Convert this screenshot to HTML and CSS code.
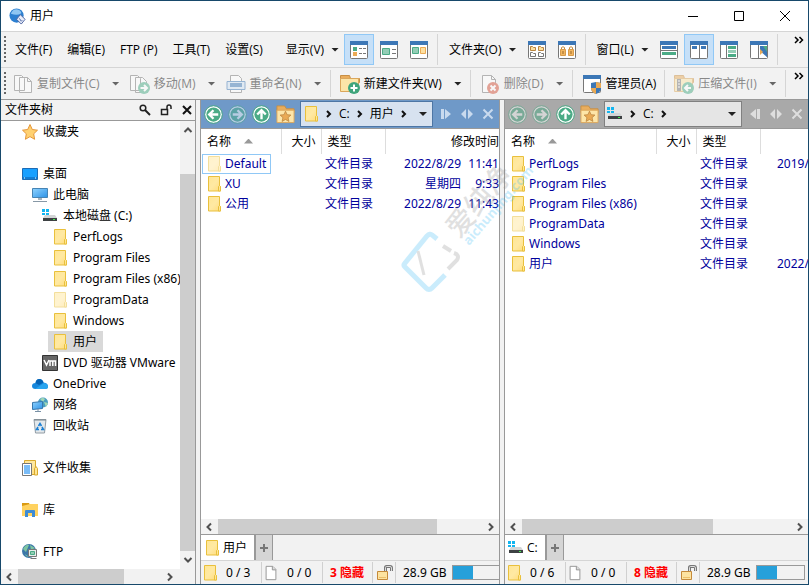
FILE: index.html
```html
<!DOCTYPE html>
<html lang="zh-CN">
<head>
    <meta charset="UTF-8">
    <meta name="viewport" content="width=device-width, initial-scale=1.0">
    <title>用户</title>
    <link rel="stylesheet" href="styles.css">
</head>
<body>
    <!-- 图标 -->
    <svg class="sprite" aria-hidden="true">
        <linearGradient id="gold" x1="0" y1="0" x2="1" y2="1">
            <stop offset="0" stop-color="#ffe694"/><stop offset=".5" stop-color="#ffe9a3"/><stop offset="1" stop-color="#ffdc7c"/>
        </linearGradient>
        <linearGradient id="sky" x1="0" y1="0" x2="1" y2="1">
            <stop offset="0" stop-color="#8fd3ff"/><stop offset="1" stop-color="#2d92e6"/>
        </linearGradient>
        <symbol id="folder" viewBox="0 0 16 16">
            <path d="M2.500 .5h11v10h1v4.500h-12z" fill="url(#gold)" stroke="#e9c03c"/>
            <path d="M12.500 15v-4.500l1-1 1 1V15z" fill="#ffe694" stroke="#e9c03c"/>
        </symbol>
        <symbol id="drive" viewBox="0 0 16 16">
            <path d="M0 1h3v3H0zM4 1h3v3H4zM0 5h3v2H0zM4 5h3v2H4z" fill="#12b5f0"/>
            <path d="M3 7h10l2 3H1z" fill="#d3d5d6"/>
            <path d="M1 10h14v3H1z" fill="#3d4143"/>
            <path d="M11 11h2v1h-2z" fill="#3ff04d"/>
        </symbol>
        <symbol id="doc" viewBox="0 0 16 18">
            <path d="M2.500 1.500h7.500l3.500 3.500v11.500h-11z" fill="#fff" stroke="#8d8d8d"/>
            <path d="M9.500 1.500v4h4" fill="#ddd" stroke="#8d8d8d"/>
        </symbol>
        <symbol id="lock" viewBox="0 0 18 18">
            <path d="M9.500 8V3.500q0-1 1-1h3.500q1.500 0 1.500 1.500v3" fill="none" stroke="#777" stroke-width="3"/>
            <path d="M9.500 8V3.500q0-1 1-1h3.500q1.500 0 1.500 1.500v3" fill="none" stroke="#ddd"/>
            <path d="M1.500 7.500h10v8h-10z" fill="#fde3a0" stroke="#c58a3a"/>
            <path d="M3 13.500h7" stroke="#edc06a"/>
        </symbol>
        <symbol id="arrow-left" viewBox="0 0 20 20">
            <circle cx="10" cy="10" r="9" fill="#fff"/><circle cx="10" cy="10" r="7.500" fill="#4bab86"/><circle cx="10" cy="10" r="9.300" fill="none" stroke="#4bab86"/>
            <path d="M15 10H6M10 5.500L5.500 10l4.500 4.500" fill="none" stroke="#fff" stroke-width="2.500"/>
        </symbol>
        <symbol id="arrow-right" viewBox="0 0 20 20">
            <circle cx="10" cy="10" r="9" fill="#fff"/><circle cx="10" cy="10" r="7.500" fill="#4bab86"/><circle cx="10" cy="10" r="9.300" fill="none" stroke="#4bab86"/>
            <path d="M5 10h9M10 5.500l4.500 4.500-4.500 4.500" fill="none" stroke="#fff" stroke-width="2.500"/>
        </symbol>
        <symbol id="arrow-up" viewBox="0 0 20 20">
            <circle cx="10" cy="10" r="9" fill="#fff"/><circle cx="10" cy="10" r="7.500" fill="#4bab86"/><circle cx="10" cy="10" r="9.300" fill="none" stroke="#4bab86"/>
            <path d="M10 15V6M5.500 10L10 5.500l4.500 4.500" fill="none" stroke="#fff" stroke-width="2.500"/>
        </symbol>
        <symbol id="favorite" viewBox="0 0 20 20">
            <path d="M1 1h8l2 3h8v4H1z" fill="#e9ad5d" stroke="#c88f45"/>
            <path d="M1 5.500h18v13H1z" fill="#fde5a8" stroke="#dba75c"/>
            <path d="M10 6.500l1.700 3.700 4 .4-3 2.700.9 4-3.600-2.100-3.600 2.100.9-4-3-2.700 4-.4z" fill="#eaaa55" stroke="#b9843f" stroke-width=".8"/>
        </symbol>
        <symbol id="chevron" viewBox="0 0 8 10"><path d="M2 2l3 3-3 3" fill="none" stroke="#111" stroke-width="2"/></symbol>
        <symbol id="to-right" viewBox="0 0 12 12"><path d="M1 1h3v10H1zM5 1l6 5-6 5z" fill="currentColor"/></symbol>
        <symbol id="to-left" viewBox="0 0 12 12"><path d="M11 1H8v10h3zM7 1L1 6l6 5z" fill="currentColor"/></symbol>
        <symbol id="swap" viewBox="0 0 12 12"><path d="M5 1v10L0 6zM7 1v10l5-5z" fill="currentColor"/></symbol>
        <symbol id="cross" viewBox="0 0 12 12"><path d="M1.500 1.500l9 9M10.500 1.500l-9 9" stroke="currentColor" stroke-width="2"/></symbol>
        <symbol id="frame" viewBox="0 0 20 20">
            <rect x="1.500" y="1.500" width="17" height="17" rx="1" fill="#fff" stroke="#777"/>
            <path d="M1 1h18v4H1z" fill="#3c77b6"/>
        </symbol>
        <symbol id="scroll-left" viewBox="0 0 10 10"><path d="M7 1.500L3.500 5 7 8.500" fill="none" stroke="#505050" stroke-width="2"/></symbol>
        <symbol id="scroll-right" viewBox="0 0 10 10"><path d="M3 1.500L6.500 5 3 8.500" fill="none" stroke="#505050" stroke-width="2"/></symbol>
    </svg>

    <div class="window">
        <header class="titlebar">
            <svg class="app-icon" viewBox="0 0 18 18">
                <circle cx="8" cy="8" r="7.500" fill="#2c7fd0"/>
                <path d="M2 6q2-5 7-4.500 4 1 4 4-4 3-11 .5z" fill="#8fc6f2"/>
                <path d="M8 12l4-5 5 5-4 5z" fill="#e9eefa" stroke="#49629f"/>
                <path d="M11 11l2 3 1-1" fill="none" stroke="#49629f"/>
            </svg>
            <h1>用户</h1>
            <button class="caption" aria-label="最小化"><svg viewBox="0 0 12 12"><path d="M1 6.500h10" stroke="#000"/></svg></button>
            <button class="caption" aria-label="最大化"><svg viewBox="0 0 12 12"><path d="M1.500 1.500h9v9h-9z" fill="none" stroke="#000"/></svg></button>
            <button class="caption" aria-label="关闭"><svg viewBox="0 0 12 12"><path d="M1 1l10 10M11 1L1 11" stroke="#000"/></svg></button>
        </header>

        <nav class="toolbar menubar">
            <span class="grip"></span>
            <button class="menu">文件(F)</button>
            <button class="menu">编辑(E)</button>
            <button class="menu">FTP (P)</button>
            <button class="menu">工具(T)</button>
            <button class="menu">设置(S)</button>
            <button class="menu view">显示(V)<span class="caret"></span></button>
            <button class="view-btn active" aria-label="详细信息">
                <svg viewBox="0 0 20 20"><use href="#frame"/><path d="M4 7h4v4H4z" fill="#4bab86"/><path d="M4 12h4v4H4z" fill="#eaaa55"/><path d="M10 8.500h3M14 8.500h3M10 13.500h3M14 13.500h3" stroke="#777"/></svg>
            </button>
            <button class="view-btn" aria-label="平铺">
                <svg viewBox="0 0 20 20"><use href="#frame"/><path d="M3.500 8.500h7v6h-7z" fill="#93cdb5" stroke="#4bab86"/><path d="M13 9.500h4M13 13.500h4" stroke="#777"/></svg>
            </button>
            <button class="view-btn" aria-label="缩略图">
                <svg viewBox="0 0 20 20"><use href="#frame"/><path d="M3.500 7.500h6v6h-6z" fill="#93cdb5" stroke="#4bab86"/><path d="M11.500 7.500h5v6h-5z" fill="#fde0a0" stroke="#eaaa55"/></svg>
            </button>
            <span class="separator"></span>
            <button class="menu">文件夹(O)<span class="caret"></span></button>
            <button class="view-btn" aria-label="文件夹视图">
                <svg viewBox="0 0 20 20"><use href="#frame"/><path d="M3.500 6.500h2l1 1h2v3h-5zM11.500 6.500h2l1 1h2v3h-5z" fill="#fde0a0" stroke="#b9843f"/><path d="M3.500 12.500h2l1 1h2v3h-5zM11.500 12.500h2l1 1h2v3h-5z" fill="#fff" stroke="#777"/></svg>
            </button>
            <button class="view-btn" aria-label="锁定文件夹">
                <svg viewBox="0 0 20 20"><use href="#frame"/><path d="M4.500 9V7.500q1.500-1.500 3 0V9M12.500 9V7.500q1.500-1.500 3 0V9" fill="none" stroke="#c58a3a"/><path d="M3.500 9.500h5v6h-5zM11.500 9.500h5v6h-5z" fill="#f3b762" stroke="#d79b4a"/><path d="M6 11v3M14 11v3" stroke="#9b6b2b"/></svg>
            </button>
            <span class="separator"></span>
            <button class="menu">窗口(L)<span class="caret"></span></button>
            <button class="view-btn" aria-label="上下排列">
                <svg viewBox="0 0 20 20"><use href="#frame"/><path d="M3 6h14v3H3z" fill="#3c77b6"/><path d="M1 10.500h18" stroke="#777"/><path d="M3 12h14v3H3z" fill="#4bab86"/></svg>
            </button>
            <button class="view-btn active" aria-label="左右排列">
                <svg viewBox="0 0 20 20"><use href="#frame"/><path d="M3 6h5v3H3zM12 6h5v3h-5z" fill="#3c77b6"/><path d="M10.500 5v14" stroke="#777"/></svg>
            </button>
            <button class="view-btn" aria-label="文件夹树">
                <svg viewBox="0 0 20 20"><use href="#frame"/><path d="M7.500 5v14" stroke="#777"/><path d="M9 6h8v3H9zM9 14h8v3H9z" fill="#4bab86"/><path d="M9 10h8v3H9z" fill="#93cdb5"/></svg>
            </button>
            <button class="view-btn" aria-label="预览">
                <svg viewBox="0 0 20 20"><use href="#frame"/><path d="M9.500 5v14" stroke="#777"/><path d="M11 6h7v11z" fill="#3c77b6"/><path d="M11 6h7v11l-7-6z" fill="#3c77b6"/><path d="M14 6h4v6z" fill="#4bab86"/><path d="M11 9l3 3-3 3z" fill="#eaaa55"/></svg>
            </button>
            <span class="separator"></span>
            <button class="more" aria-label="更多"><svg viewBox="0 0 10 8"><path d="M1 1l3 3-3 3M5.500 1l3 3-3 3" fill="none" stroke="#000" stroke-width="1.500"/></svg></button>
        </nav>

        <div class="toolbar actions">
            <span class="grip"></span>
            <button class="action" disabled>
                <svg viewBox="0 0 20 20"><path d="M1.500 1.500h7l3 3v12h-10zM6.500 3.500h8l4 4v11h-12z" fill="#fff" stroke="#777"/><path d="M14.500 3.500v4h4" fill="none" stroke="#777"/></svg>
                复制文件(C)<span class="caret"></span>
            </button>
            <button class="action" disabled>
                <svg viewBox="0 0 20 20"><path d="M.5 1.500h7l3 3v12H.5zM5.500 3.500h7l4 4v11h-11z" fill="#fff" stroke="#777"/><circle cx="14" cy="14" r="6" fill="#4bab86"/><path d="M10.500 14h6M14 11l3 3-3 3" fill="none" stroke="#fff" stroke-width="2"/></svg>
                移动(M)<span class="caret"></span>
            </button>
            <button class="action" disabled>
                <svg viewBox="0 0 20 20"><path d="M4.500 18.500v-17h8l3 3v14z" fill="#fff" stroke="#777"/><path d="M1 7.500h18v8H1z" fill="#cfe2f2" stroke="#3c77b6"/><path d="M4 9h12v4H4z" fill="#3c77b6"/></svg>
                重命名(N)<span class="caret"></span>
            </button>
            <span class="separator"></span>
            <button class="action">
                <svg viewBox="0 0 20 20"><path d="M.5 1.500h9l1 3h9v4H.5z" fill="#eaad5c" stroke="#c88f45"/><path d="M.5 4.500h18v13H.5z" fill="#fde5a8" stroke="#dba75c"/><circle cx="14" cy="14" r="6" fill="#3fa57c"/><path d="M14 10.500v7M10.500 14h7" stroke="#fff" stroke-width="2"/></svg>
                新建文件夹(W)<span class="caret"></span>
            </button>
            <span class="separator"></span>
            <button class="action" disabled>
                <svg viewBox="0 0 20 20"><path d="M2.500 1.500h9l4 4v13h-13z" fill="#fff" stroke="#777"/><path d="M11.500 1.500v4h4" fill="none" stroke="#777"/><circle cx="13" cy="14" r="6" fill="#d4553d"/><path d="M10.500 11.500l5 5M15.500 11.500l-5 5" stroke="#fff" stroke-width="2"/></svg>
                删除(D)<span class="caret"></span>
            </button>
            <span class="separator"></span>
            <button class="action">
                <svg viewBox="0 0 20 20"><use href="#frame"/><path d="M9 9l5-1 5 1v5q0 4-5 6-5-2-5-6z" fill="#3c77b6"/><path d="M14 8l5 1v5h-5zM14 14v6q-5-2-5-6z" fill="#eaaa55"/></svg>
                管理员(A)
            </button>
            <span class="separator"></span>
            <button class="action" disabled>
                <svg viewBox="0 0 20 20"><path d="M.5 1.500h9l1 3h9v4H.5z" fill="#eaad5c" stroke="#c88f45"/><path d="M.5 4.500h18v13H.5z" fill="#fde5a8" stroke="#dba75c"/><path d="M3 5h4v12H3z" fill="#777"/><path d="M4 7h2M4 10h2M4 13h2" stroke="#fff"/><circle cx="14" cy="14" r="6" fill="#4bab86"/><path d="M17 14h-6M14 11l-3 3 3 3" fill="none" stroke="#fff" stroke-width="2"/></svg>
                压缩文件(I)<span class="caret"></span>
            </button>
            <span class="separator"></span>
            <button class="more" aria-label="更多"><svg viewBox="0 0 10 8"><path d="M1 1l3 3-3 3M5.500 1l3 3-3 3" fill="none" stroke="#000" stroke-width="1.500"/></svg></button>
        </div>

        <main class="content">
            <!-- 文件夹树 -->
            <aside class="tree-panel">
                <div class="tree-header">
                    <h2>文件夹树</h2>
                    <button aria-label="搜索"><svg viewBox="0 0 12 12"><circle cx="4" cy="4" r="2.800" fill="none" stroke="#222" stroke-width="1.500"/><path d="M6 6l5 5" stroke="#222" stroke-width="2"/></svg></button>
                    <button aria-label="锁定"><svg viewBox="0 0 12 12"><path d="M1.500 5.500h6v5h-6zM7 5V3q0-2 2-2t2 2v2" fill="none" stroke="#222" stroke-width="1.500"/></svg></button>
                    <button aria-label="关闭文件夹树"><svg viewBox="0 0 12 12"><path d="M2 2l8 8M10 2l-8 8" stroke="#111" stroke-width="2"/></svg></button>
                </div>
                <div class="tree-box">
                    <ul class="tree">
                        <li><a href="#"><svg viewBox="0 0 16 16"><path d="M8 .5l2.300 5 5.200.7-3.800 3.600.9 5.500L8 12.600l-4.600 2.700.9-5.500L.5 6.200l5.200-.7z" fill="#ffd171" stroke="#e5963a"/></svg>收藏夹</a></li>
                        <li class="group"><a href="#"><svg viewBox="0 0 16 16"><path d="M.5 2.500h15v11H.5z" fill="#18a0ff" stroke="#1c6bb5"/><path d="M1 12h14" stroke="#0b5ba8"/><path d="M2 12h1M13 12h1" stroke="#fff"/></svg>桌面</a>
                            <ul>
                                <li><a href="#"><svg viewBox="0 0 16 16"><path d="M.5 1.500h15v9H.5z" fill="url(#sky)" stroke="#4684b4"/><path d="M6 11h4v2H6z" fill="#a8b4be"/><path d="M1 14.500h14" stroke="#8798a6"/></svg>此电脑</a>
                                    <ul>
                                        <li><a href="#"><svg><use href="#drive"/></svg>本地磁盘 (C:)</a>
                                            <ul>
                                                <li><a href="#"><svg><use href="#folder"/></svg>PerfLogs</a></li>
                                                <li><a href="#"><svg><use href="#folder"/></svg>Program Files</a></li>
                                                <li><a href="#"><svg><use href="#folder"/></svg>Program Files (x86)</a></li>
                                                <li><a href="#"><svg class="faded"><use href="#folder"/></svg>ProgramData</a></li>
                                                <li><a href="#"><svg><use href="#folder"/></svg>Windows</a></li>
                                                <li><a href="#" class="selected"><svg><use href="#folder"/></svg>用户</a></li>
                                            </ul>
                                        </li>
                                        <li><a href="#"><svg viewBox="0 0 16 16"><path d="M.5 .5h15v15H.5z" fill="#666" stroke="#333"/><path d="M2 5l2.500 5L7 5M8 11V6h5.500v5M10.800 6v5" fill="none" stroke="#fff" stroke-width="1.500"/></svg>DVD 驱动器 VMware</a></li>
                                    </ul>
                                </li>
                                <li><a href="#"><svg viewBox="0 0 16 16"><path d="M3.500 13Q0 13 0 10q0-3 3.500-3Q4 3 7.500 3q3 0 4 3.500Q16 7 16 10.500q0 2.500-3 2.500z" fill="#1687dc"/><path d="M3.500 7Q4 3 7.500 3q3 0 4 3.500L7 9z" fill="#0563b5"/><path d="M3 13l9-6q4 .5 4 3.500 0 2.500-3 2.500z" fill="#2aa5ef"/></svg>OneDrive</a></li>
                                <li><a href="#"><svg viewBox="0 0 16 16"><circle cx="11" cy="5.500" r="5" fill="#4a9ec0"/><path d="M8 2q3-2 5 0l-2 3zM12 5l4 1-2 4z" fill="#a4d8b5"/><path d="M.5 5.500l10-1v7l-10 1z" fill="url(#sky)" stroke="#3978ac"/><path d="M3 14.500h6M6 12v2" stroke="#7890a5"/></svg>网络</a></li>
                                <li><a href="#"><svg viewBox="0 0 16 16"><path d="M2 1.500h12L12.500 15h-9z" fill="#e3e8eb" stroke="#929da5"/><path d="M2 2h12" stroke="#78848d"/><path d="M6.500 8L8 5.500 9.500 8M10 9l1.500 2.500H9M7 11.500H4.500L6 9" fill="none" stroke="#1b7fd3" stroke-width="1.500"/></svg>回收站</a></li>
                            </ul>
                        </li>
                        <li class="group"><a href="#"><svg viewBox="0 0 16 16"><path d="M2.500 .5h11v14h-11z" fill="url(#gold)" stroke="#d8a92d"/><path d="M.5 3.500h9v12h-9z" fill="#fff" stroke="#777"/><path d="M2 5h6v9H2z" fill="#79bcf7"/><path d="M12.500 15V8.500l1.500-2 1.500 2V15z" fill="#ffe694" stroke="#d8a92d"/></svg>文件收集</a></li>
                        <li class="group"><a href="#"><svg viewBox="0 0 16 16"><path d="M0 1h7l1 2v3H0z" fill="#da9a13"/><path d="M0 4l8-2h8v12H0z" fill="#ffd25f"/><path d="M3 15V9q0-1 1-1h8q1 0 1 1v6h-3v-4H6v4z" fill="#3d8bd5"/></svg>库</a></li>
                        <li class="group"><a href="#"><svg viewBox="0 0 16 16"><circle cx="7" cy="7" r="7" fill="#3c77a8"/><path d="M1 5q3-5 6-4L4 8zM8 1l5 3-4 2zM3 10l4 3-3-1z" fill="#7cc5a0"/><path d="M6.500 5.500h8v7h-8zM8.500 14.500h6" fill="#e8eeec" stroke="#777"/><path d="M8.500 7.500h4v3h-4z" fill="#93cdb5" stroke="#4bab86"/></svg>FTP</a></li>
                    </ul>
                    <div class="vscroll">
                        <svg viewBox="0 0 10 10"><path d="M1.500 7L5 3.500 8.500 7" fill="none" stroke="#505050" stroke-width="2"/></svg>
                        <span class="vthumb"></span>
                        <svg viewBox="0 0 10 10"><path d="M1.500 3L5 6.500 8.500 3" fill="none" stroke="#505050" stroke-width="2"/></svg>
                    </div>
                    <div class="hscroll">
                        <svg><use href="#scroll-left"/></svg>
                        <span class="track"><span class="thumb tree-thumb"></span></span>
                        <svg><use href="#scroll-right"/></svg>
                    </div>
                </div>
            </aside>

            <!-- 左窗格 -->
            <section class="pane focused">
                <div class="address">
                    <button class="nav-btn" aria-label="后退"><svg><use href="#arrow-left"/></svg></button>
                    <button class="nav-btn" aria-label="前进" disabled><svg><use href="#arrow-right"/></svg></button>
                    <button class="nav-btn" aria-label="向上"><svg><use href="#arrow-up"/></svg></button>
                    <button class="nav-btn" aria-label="收藏"><svg><use href="#favorite"/></svg></button>
                    <div class="crumbs">
                        <svg class="icon"><use href="#folder"/></svg>
                        <svg class="chevron"><use href="#chevron"/></svg>
                        <a href="#">C:</a>
                        <svg class="chevron"><use href="#chevron"/></svg>
                        <a href="#">用户</a>
                        <svg class="chevron"><use href="#chevron"/></svg>
                        <button class="drop" aria-label="历史"><span class="caret"></span></button>
                    </div>
                    <div class="pane-tools">
                        <button aria-label="复制到右侧"><svg><use href="#to-right"/></svg></button>
                        <button aria-label="交换"><svg><use href="#swap"/></svg></button>
                        <button aria-label="关闭窗格"><svg><use href="#cross"/></svg></button>
                    </div>
                </div>
                <div class="list">
                    <table>
                        <colgroup><col class="col-name"><col class="col-size"><col class="col-type"><col class="col-date"></colgroup>
                        <thead>
                            <tr><th>名称<span class="sort"></span></th><th class="right">大小</th><th>类型</th><th class="modified">修改时间</th></tr>
                        </thead>
                        <tbody>
                            <tr><td><a href="#" class="file current"><svg class="icon faded"><use href="#folder"/></svg>Default</a></td><td></td><td>文件目录</td><td class="date"><span>2022/8/29</span><span>11:41</span></td></tr>
                            <tr><td><a href="#" class="file"><svg class="icon"><use href="#folder"/></svg>XU</a></td><td></td><td>文件目录</td><td class="date"><span>星期四</span><span>9:33</span></td></tr>
                            <tr><td><a href="#" class="file"><svg class="icon"><use href="#folder"/></svg>公用</a></td><td></td><td>文件目录</td><td class="date"><span>2022/8/29</span><span>11:43</span></td></tr>
                        </tbody>
                    </table>
                </div>
                <div class="hscroll">
                    <svg><use href="#scroll-left"/></svg>
                    <span class="track"><span class="thumb"></span></span>
                    <svg><use href="#scroll-right"/></svg>
                </div>
                <div class="tabs">
                    <button class="tab"><svg class="icon"><use href="#folder"/></svg>用户</button>
                    <button class="add" aria-label="新建标签"><svg viewBox="0 0 10 10"><path d="M1 5h8M5 1v8" stroke="#777" stroke-width="2"/></svg></button>
                </div>
                <footer class="status">
                    <span class="cell count"><svg class="icon"><use href="#folder"/></svg>0 / 3</span>
                    <span class="cell count"><svg class="icon"><use href="#doc"/></svg>0 / 0</span>
                    <span class="cell hidden-count">3 隐藏</span>
                    <span class="cell lock"><svg><use href="#lock"/></svg></span>
                    <span class="cell space">28.9 GB<span class="disk"><span class="used"></span></span></span>
                </footer>
            </section>

            <!-- 右窗格 -->
            <section class="pane">
                <div class="address">
                    <button class="nav-btn" aria-label="后退" disabled><svg><use href="#arrow-left"/></svg></button>
                    <button class="nav-btn" aria-label="前进" disabled><svg><use href="#arrow-right"/></svg></button>
                    <button class="nav-btn" aria-label="向上"><svg><use href="#arrow-up"/></svg></button>
                    <button class="nav-btn" aria-label="收藏"><svg><use href="#favorite"/></svg></button>
                    <div class="crumbs">
                        <svg class="icon"><use href="#drive"/></svg>
                        <svg class="chevron"><use href="#chevron"/></svg>
                        <a href="#">C:</a>
                        <svg class="chevron"><use href="#chevron"/></svg>
                        <button class="drop" aria-label="历史"><span class="caret"></span></button>
                    </div>
                    <div class="pane-tools">
                        <button aria-label="复制到左侧"><svg><use href="#to-left"/></svg></button>
                        <button aria-label="交换"><svg><use href="#swap"/></svg></button>
                        <button aria-label="关闭窗格"><svg><use href="#cross"/></svg></button>
                    </div>
                </div>
                <div class="list">
                    <table class="wide">
                        <colgroup><col class="col-name"><col class="col-size"><col class="col-type"><col class="col-date"></colgroup>
                        <thead>
                            <tr><th>名称<span class="sort"></span></th><th class="right">大小</th><th>类型</th><th></th></tr>
                        </thead>
                        <tbody>
                            <tr><td><a href="#" class="file"><svg class="icon"><use href="#folder"/></svg>PerfLogs</a></td><td></td><td>文件目录</td><td class="date"><span>2019/</span></td></tr>
                            <tr><td><a href="#" class="file"><svg class="icon"><use href="#folder"/></svg>Program Files</a></td><td></td><td>文件目录</td><td></td></tr>
                            <tr><td><a href="#" class="file"><svg class="icon"><use href="#folder"/></svg>Program Files (x86)</a></td><td></td><td>文件目录</td><td></td></tr>
                            <tr><td><a href="#" class="file"><svg class="icon faded"><use href="#folder"/></svg>ProgramData</a></td><td></td><td>文件目录</td><td></td></tr>
                            <tr><td><a href="#" class="file"><svg class="icon"><use href="#folder"/></svg>Windows</a></td><td></td><td>文件目录</td><td></td></tr>
                            <tr><td><a href="#" class="file"><svg class="icon"><use href="#folder"/></svg>用户</a></td><td></td><td>文件目录</td><td class="date"><span>2022/</span></td></tr>
                        </tbody>
                    </table>
                </div>
                <div class="hscroll">
                    <svg><use href="#scroll-left"/></svg>
                    <span class="track"><span class="thumb"></span></span>
                    <svg><use href="#scroll-right"/></svg>
                </div>
                <div class="tabs">
                    <button class="tab"><svg class="icon"><use href="#drive"/></svg>C:</button>
                    <button class="add" aria-label="新建标签"><svg viewBox="0 0 10 10"><path d="M1 5h8M5 1v8" stroke="#777" stroke-width="2"/></svg></button>
                </div>
                <footer class="status">
                    <span class="cell count"><svg class="icon"><use href="#folder"/></svg>0 / 6</span>
                    <span class="cell count"><svg class="icon"><use href="#doc"/></svg>0 / 0</span>
                    <span class="cell hidden-count">8 隐藏</span>
                    <span class="cell lock"><svg><use href="#lock"/></svg></span>
                    <span class="cell space">28.9 GB<span class="disk"><span class="used"></span></span></span>
                </footer>
            </section>

            <!-- 水印 -->
            <svg class="watermark" viewBox="0 0 140 150" aria-hidden="true">
                <path d="M37 53l-5-4q-2-2-5 1L5 77q-2 2 0 4l21 21q3 3 6 0l13-13" fill="none" stroke="#32b7f5" stroke-width="5"/>
                <path d="M18 65l6 24" fill="none" stroke="#888" stroke-width="3"/>
                <path d="M43 60l8 5M54 67q6 2 3 7L48 83" fill="none" stroke="#888" stroke-width="4"/>
                <text class="mark-cn" transform="translate(59 53) rotate(-49)">爱纯净</text>
                <text class="mark-url" transform="translate(69 60) rotate(-49)">aichunjing.com</text>
            </svg>
        </main>
    </div>
</body>
</html>
```
FILE: styles.css
```css
/* General */
* {
    box-sizing: border-box;
}

body {
    margin: 0;
    font-family: "Open Sans", "Noto Sans CJK SC", sans-serif;
    font-size: 12px;
    line-height: 20px;
    color: #000;
}

h1,
h2 {
    margin: 0;
    font-size: 12px;
    font-weight: normal;
}

button {
    display: flex;
    align-items: center;
    justify-content: center;
    margin: 0;
    padding: 0;
    border: none;
    background: none;
    font: inherit;
    color: inherit;
    white-space: nowrap;
}

a {
    color: inherit;
    text-decoration: none;
}

svg {
    display: block;
    flex: none;
}

.sprite {
    position: absolute;
    width: 0;
    height: 0;
}

.icon {
    width: 16px;
    height: 16px;
}

.faded {
    opacity: 0.5;
}

.window {
    display: flex;
    flex-direction: column;
    height: 100vh;
    min-height: 400px;
    overflow: hidden;
    border: 1px solid #17496b;
    background: #f2f2f2;
}

/* Title bar */
.titlebar {
    display: flex;
    align-items: center;
    height: 30px;
    flex: none;
    padding-left: 8px;
    background: #fff;
}

.titlebar h1 {
    flex: 1;
    margin-left: 4px;
}

.app-icon {
    width: 17px;
    height: 17px;
}

.caption {
    width: 46px;
    height: 30px;
}

.caption svg {
    width: 12px;
    height: 12px;
}

/* Toolbars */
.toolbar {
    display: flex;
    align-items: center;
    flex: none;
    border-top: 1px solid #d5d5d5;
    overflow: hidden;
}

.menubar {
    height: 36px;
}

.actions {
    height: 32px;
}

.grip {
    align-self: stretch;
    width: 2px;
    margin: 4px 2px 4px 3px;
    flex: none;
    background: repeating-linear-gradient(#666 0 2px, transparent 2px 4px);
}

.menu {
    height: 30px;
    padding: 0 8px 0 7px;
}

.menu.view {
    margin-left: 8px;
}

.menu .caret {
    margin-left: 7px;
}

.menu:has(.caret) {
    padding-right: 5px;
}

.caret {
    width: 8px;
    height: 4px;
    flex: none;
    background: #222;
    clip-path: polygon(0 0, 100% 0, 50% 100%);
}

.view-btn {
    width: 30px;
    height: 31px;
    flex: none;
    border: 1px solid transparent;
}

.view-btn.active {
    background: #c6e0f8;
    border-color: #90c8f6;
}

.view-btn svg,
.action svg {
    width: 20px;
    height: 20px;
}

.separator {
    align-self: stretch;
    width: 1px;
    margin: 2px 4px 2px 3px;
    flex: none;
    background: #d5d5d5;
}

.action {
    height: 28px;
    padding: 0 5px;
    gap: 4px;
}

.action .caret {
    margin-left: 8px;
}

.action:disabled {
    color: #888;
}

.action:disabled svg {
    opacity: 0.5;
}

.action:disabled .caret {
    background: #666;
}

.more {
    align-self: flex-start;
    margin: 4px 4px 0 auto;
}

.more svg {
    width: 10px;
    height: 8px;
}

/* Content */
.content {
    position: relative;
    display: grid;
    grid-template-columns: 195px 300fr 304fr;
    flex: 1;
    min-height: 0;
    column-gap: 4px;
    border-top: 1px solid #999;
}

.tree-panel {
    display: flex;
    flex-direction: column;
    min-width: 0;
    min-height: 0;
    border-right: 1px solid #999;
}

.tree-header {
    display: flex;
    align-items: center;
    height: 20px;
    flex: none;
    padding: 0 2px 0 4px;
    gap: 9px;
}

.tree-header h2 {
    flex: 1;
}

.tree-header svg {
    width: 12px;
    height: 12px;
}

.tree-box {
    display: grid;
    grid-template-columns: 1fr 15px;
    grid-template-rows: 1fr 15px;
    flex: 1;
    min-height: 0;
    border-top: 1px solid #999;
    background: #f2f2f2;
}

.tree {
    min-width: 0;
    overflow: hidden;
    background: #fff;
    padding: 0 0 0 17px;
}

.tree,
.tree ul,
.file,
.date,
.status {
    font-family: "Noto Sans", "Noto Sans CJK SC", sans-serif;
}

.tree,
.tree ul {
    margin: 0;
    list-style: none;
}

.tree ul {
    padding-left: 10px;
}

.tree .group {
    margin-top: 21px;
}

.tree a {
    display: flex;
    align-items: center;
    width: max-content;
    height: 21px;
    padding: 0 6px 0 4px;
    gap: 5px;
    white-space: nowrap;
}

.tree a svg {
    width: 16px;
    height: 16px;
}

.tree .selected {
    background: #d9d9d9;
}

.vscroll {
    display: flex;
    flex-direction: column;
    align-items: center;
    justify-content: space-between;
    padding: 4px 0;
}

.vscroll svg,
.hscroll svg {
    width: 10px;
    height: 10px;
}

.vthumb {
    width: 15px;
    flex: 1;
    margin: 39px 0 4px;
    background: #cdcdcd;
}

.hscroll {
    display: flex;
    align-items: center;
    height: 15px;
    flex: none;
    padding: 0 3px;
    gap: 4px;
    background: #f2f2f2;
}

.tree-box .hscroll {
    padding-right: 5px;
}

.track {
    flex: 1;
    height: 15px;
}

.thumb {
    display: block;
    width: 83%;
    height: 15px;
    background: #cdcdcd;
}

.tree-thumb {
    width: 74%;
}

/* File panes */
.pane {
    display: flex;
    flex-direction: column;
    min-width: 0;
    min-height: 0;
    border-left: 1px solid #999;
    border-right: 1px solid #999;
}

.pane:last-of-type {
    border-right: none;
}

.pane:last-of-type .thumb {
    width: 71%;
}

.address {
    display: flex;
    align-items: center;
    height: 29px;
    flex: none;
    padding-left: 3px;
    gap: 5px;
    border-bottom: 1px solid #999;
    background: #a9a9a9;
    color: #dedede;
}

.focused .address {
    background: #6f99c8;
    color: #c9daee;
}

.nav-btn svg {
    width: 19px;
    height: 19px;
}

.nav-btn:disabled svg {
    opacity: 0.5;
}

.crumbs {
    display: flex;
    align-items: center;
    flex: 1;
    height: 26px;
    padding-left: 2px;
    gap: 6px;
    border: 1px solid #808080;
    background: #e5e5e5;
    color: #000;
}

.focused .crumbs {
    border-color: #4d76a5;
    background: #d7e2f0;
}

.chevron {
    width: 8px;
    height: 10px;
}

.drop {
    width: 18px;
    height: 24px;
    margin-left: auto;
}

.pane-tools {
    display: flex;
    align-items: center;
    gap: 9px;
    padding: 0 5px 0 2px;
}

.pane-tools svg {
    width: 12px;
    height: 12px;
}

.list {
    flex: 1;
    min-height: 0;
    overflow: hidden;
    background: #fff;
}

table {
    width: 100%;
    table-layout: fixed;
    border-collapse: collapse;
    white-space: nowrap;
}

.col-name {
    width: 80px;
}

.wide .col-name {
    width: 151px;
}

.col-size {
    width: 40px;
}

.col-type {
    width: 64px;
}

th {
    height: 25px;
    padding: 0 6px;
    border-right: 1px solid #ddd;
    font-weight: normal;
    text-align: left;
}

th:last-child {
    border-right: none;
}

th.right,
th.modified {
    text-align: right;
}

th.right {
    padding: 0 5px;
}

th.modified {
    padding: 0;
}

.sort {
    display: inline-block;
    width: 9px;
    height: 5px;
    margin-left: 13px;
    background: #999;
    clip-path: polygon(50% 0, 100% 100%, 0 100%);
    vertical-align: 2px;
}

td {
    height: 20px;
    padding: 0 0 0 4px;
    color: #00009c;
}

td:first-child {
    padding-left: 1px;
}

.file {
    display: flex;
    align-items: center;
    width: max-content;
    height: 20px;
    padding: 0 4px 0 3px;
    gap: 3px;
    border: 1px solid transparent;
}

.file.current {
    border-color: #90c8f6;
}

.date span {
    display: inline-block;
    width: 72px;
    text-align: right;
}

.date span + span {
    width: 38px;
}

.wide .date span {
    padding-left: 13px;
    text-align: left;
}

.tabs {
    display: flex;
    height: 26px;
    flex: none;
    border-top: 1px solid #999;
}

.tab {
    padding: 0 7px 0 3px;
    gap: 3px;
    border-right: 2px solid #999;
    background: #fff;
}

.add {
    width: 17px;
    border-right: 1px solid #999;
    background: #d5d5d5;
}

.add svg {
    width: 10px;
    height: 10px;
}

/* Status bar */
.status {
    display: flex;
    align-items: center;
    height: 24px;
    flex: none;
    overflow: hidden;
    border-top: 1px solid #d5d5d5;
    white-space: nowrap;
}

.cell {
    display: flex;
    align-items: center;
    height: 21px;
    flex: none;
    border-right: 1px solid #d0d0d0;
}

.count {
    width: 61px;
    padding-left: 1px;
    gap: 8px;
}

.hidden-count {
    width: 50px;
    padding-left: 7px;
    color: #f00;
    font-weight: bold;
}

.lock {
    width: 23px;
    padding-left: 3px;
}

.lock svg {
    width: 18px;
    height: 18px;
}

.space {
    padding-left: 7px;
    gap: 6px;
    border-right: none;
}

.disk {
    width: 49px;
    height: 15px;
    border: 1px solid #999;
    background: #f2f2f2;
}

.used {
    display: block;
    width: 42%;
    height: 13px;
    background: #26a0da;
}

/* Watermark over both panes */
.watermark {
    position: absolute;
    left: 399px;
    top: 86px;
    width: 140px;
    height: 150px;
    opacity: 0.25;
    pointer-events: none;
    overflow: visible;
}

.mark-cn {
    font-family: "Noto Sans CJK SC", sans-serif;
    font-size: 28px;
    font-weight: 500;
    fill: #888;
}

.mark-url {
    font-family: "Noto Sans", sans-serif;
    font-size: 13px;
    font-weight: bold;
    fill: #32b7f5;
}
```
